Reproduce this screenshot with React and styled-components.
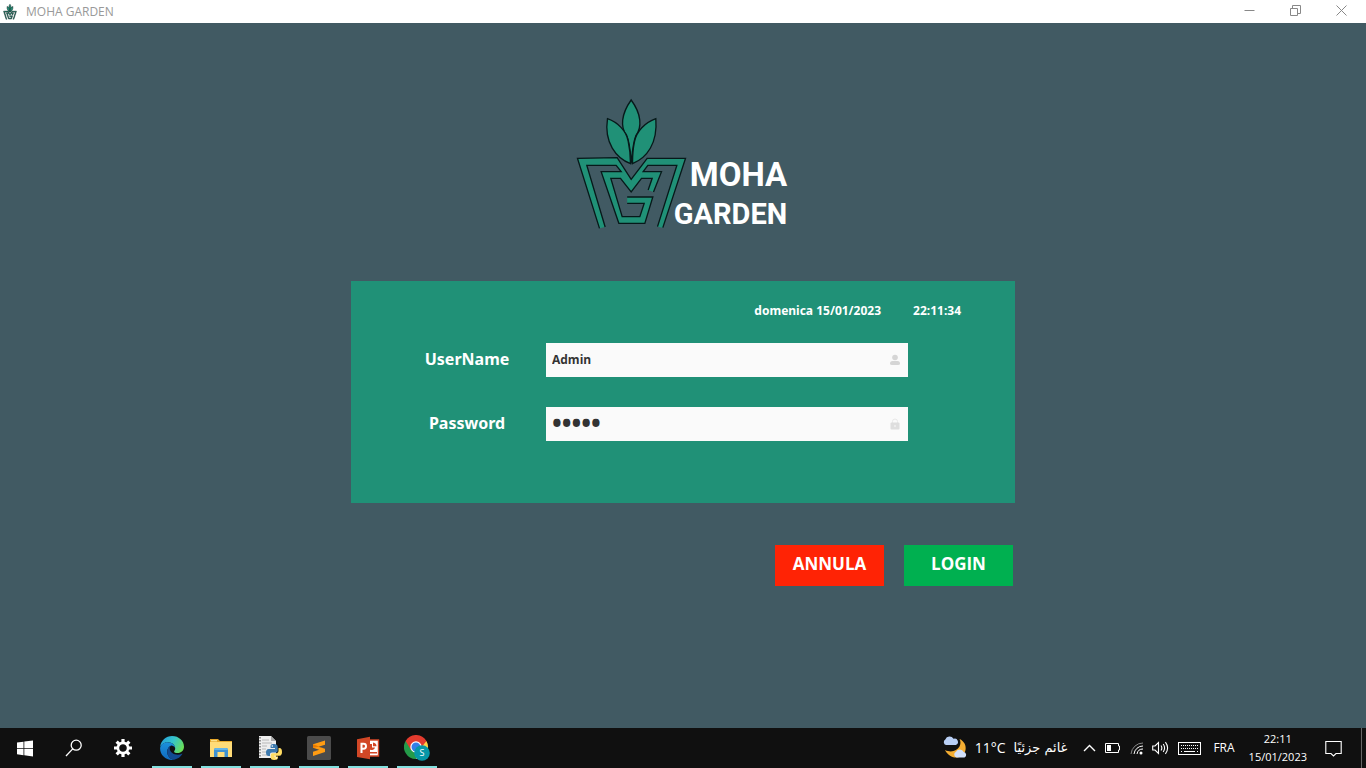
import React from 'react';
import styled, { createGlobalStyle } from 'styled-components';

const GlobalStyle = createGlobalStyle`
  *, *::before, *::after { box-sizing: border-box; }
  body { margin: 0; font-family: "Noto Sans", "Open Sans", sans-serif; }
  button, input { font: inherit; color: inherit; }
`;

const Screen = styled.div`
  min-height: 100vh;
  display: flex;
  flex-direction: column;
  background: #415a63;
`;

/* Window title bar */
const TitleBar = styled.header`
  height: 23px;
  display: flex;
  align-items: center;
  padding: 0 2px;
  background: #fff;
  color: #999;
`;

const Title = styled.span`
  flex: 1;
  margin-left: 8px;
  font-family: "Open Sans", sans-serif;
  font-size: 12px;
  line-height: 20px;
`;

const WindowButton = styled.button`
  width: 46px;
  height: 23px;
  padding: 0 0 2px;
  border: 0;
  background: none;
  display: flex;
  align-items: center;
  justify-content: center;
`;

/* Login page */
const Main = styled.main`
  flex: 1;
  display: flex;
  flex-direction: column;
  align-items: center;
  padding: 75px 16px 32px;
`;

const Brand = styled.div`
  display: flex;
  align-items: flex-end;
  margin-bottom: 49px;
`;

const WordMark = styled.h1`
  margin: 0 3px 0 -13px;
  display: flex;
  flex-direction: column;
  align-items: flex-end;
  gap: 3px;
  font-family: Roboto, sans-serif;
  font-weight: 700;
  color: #fff;
`;

const WordLine = styled.span`
  font-size: ${(p) => p.$size}px;
  line-height: 36px;
`;

const LoginForm = styled.form`
  width: 100%;
  max-width: 664px;
`;

const Card = styled.div`
  background: #209177;
  color: #fff;
  padding: 20px 54px 62px 74px;
`;

const DateRow = styled.div`
  display: flex;
  justify-content: flex-end;
  gap: 32px;
  margin-bottom: 22px;
  font-size: 12px;
  line-height: 20px;
  font-weight: 700;
`;

const Fields = styled.div`
  display: grid;
  grid-template-columns: 84px minmax(0, 362px);
  gap: 30px 37px;
  align-items: center;
`;

const Label = styled.label`
  display: flex;
  justify-content: center;
  padding-bottom: 2px;
  font-size: 16px;
  line-height: 24px;
  font-weight: 700;
`;

const InputBox = styled.div`
  height: 34px;
  display: flex;
  align-items: center;
  padding: 0 7px 0 6px;
  background: #fafafa;
  color: #333;
`;

const Input = styled.input`
  flex: 1;
  min-width: 0;
  height: 34px;
  padding: 0 0 2px;
  border: 0;
  outline: 0;
  background: none;
  font-family: "Open Sans", sans-serif;
  font-size: ${(p) => (p.type === 'password' ? 26 : 12)}px;
  font-weight: 700;
`;

const Actions = styled.div`
  display: flex;
  justify-content: flex-end;
  gap: 20px;
  padding: 42px 2px 0;
`;

const ActionButton = styled.button`
  width: 109px;
  height: 41px;
  padding: 0 0 4px;
  border: 0;
  background: ${(p) => p.$color};
  color: #fff;
  font-family: "Open Sans", sans-serif;
  font-size: 17px;
  font-weight: 700;
`;

/* Taskbar */
const Taskbar = styled.footer`
  height: 40px;
  display: flex;
  justify-content: space-between;
  background: #101010;
  color: #fff;
  font-family: "Open Sans", sans-serif;
`;

const Apps = styled.nav`
  display: flex;
  gap: 9px;
  padding-left: 5px;
`;

const AppButton = styled.button`
  width: 40px;
  height: 40px;
  padding: 2px 0 0;
  border: 0;
  border-bottom: 2px solid ${(p) => (p.$open ? '#83e0df' : 'transparent')};
  background: none;
  display: flex;
  align-items: center;
  justify-content: center;
`;

const Tray = styled.div`
  display: flex;
  align-items: center;
  gap: 9px;
  padding-right: 4px;
`;

const Weather = styled.div`
  display: flex;
  align-items: center;
  gap: 8px;
  margin-right: 7px;
  font-size: 14px;
  line-height: 20px;
`;

const Arabic = styled.span`
  font-family: "DejaVu Sans", sans-serif;
  font-size: 13px;
`;

const Language = styled.span`
  font-size: 12px;
  line-height: 20px;
  margin: 0 5px 0 3px;
`;

const Clock = styled.div`
  margin-right: 9px;
  font-size: 11px;
  line-height: 18px;
  text-align: center;
`;

const ShowDesktop = styled.div`
  width: 1px;
  height: 40px;
  margin-left: 10px;
  background: #666;
`;

const LogoMark = ({ width, height, line }) => (
  <svg width={width} height={height} viewBox="30 24 332 402" aria-hidden="true">
    <g fill="#209177" stroke="#07191a" strokeWidth={line} strokeLinejoin="miter">
      <path d="M195 30C165 72 162 112 181 135C192 160 193 190 195 220C198 190 200 160 209 137C228 112 226 72 195 30Z" />
      <path d="M124 86C155 97 180 122 186 153C191 176 193 198 193 221C150 204 113 158 124 86Z" />
      <path d="M269 86C236 98 211 124 205 155C200 178 199 198 199 221C242 204 275 160 269 86Z" />
    </g>
    <path
      fill="#209177"
      d="M100 415L34 205L153 203L195 268L243 205L358 205L290 413L274 410L332 226L245 226L231 245L286 245L262 306L246 300L258 265L226 265L195 306L163 265L134 265L168 380L221 380L234 340L183 340L183 321L260 321L236 400L158 400L105 245L165 245L150 226L62 226L117 411Z"
    />
    <g fill="none" stroke="#07191a" strokeWidth={line}>
      <path d="M100 415L34 205L153 203L195 268L243 205L358 205L290 413" />
      <path d="M274 410L332 226L245 226L231 245L286 245L262 306" />
      <path d="M246 300L258 265L226 265L195 306L163 265L134 265L168 380L221 380L234 340L183 340" />
      <path d="M183 321L260 321L236 400L158 400L105 245L165 245L150 226L62 226L117 411" />
    </g>
  </svg>
);

const UserIcon = () => (
  <svg width="12" height="12" viewBox="0 0 12 12" fill="#d5d5d5" aria-hidden="true">
    <circle cx="6" cy="3.5" r="2.8" />
    <path d="M1 9.5Q1 7 3.5 7H8.5Q11 7 11 9.5Q11 11 9 11H3Q1 11 1 9.5Z" />
  </svg>
);

const LockIcon = () => (
  <svg width="12" height="12" viewBox="0 0 12 12" aria-hidden="true">
    <path d="M3.5 6V3.5Q3.5 1 6 1T8.5 3.5V6" fill="none" stroke="#e8e8e8" />
    <rect x="1.5" y="4.5" width="9" height="7" rx="1" fill="#dedede" />
    <circle cx="6" cy="8" r="1.2" fill="#ececec" />
  </svg>
);

const StartIcon = () => (
  <svg width="16" height="17" viewBox="0 0 16 17" fill="#fff">
    <path d="M0 2.6L6.5 1.7V8H0ZM7.3 1.6L16 .4V8H7.3ZM0 8.8H6.5V15.2L0 14.3ZM7.3 8.8H16V16.5L7.3 15.3Z" />
  </svg>
);

const SearchIcon = () => (
  <svg width="18" height="18" viewBox="0 0 18 18" fill="none" stroke="#fff" strokeWidth="1.3">
    <circle cx="11.2" cy="6.2" r="5" />
    <path d="M7.7 9.9L1 17" />
  </svg>
);

const GearIcon = () => (
  <svg width="18" height="18" viewBox="-9 -9 18 18" fill="none" stroke="#fff">
    <circle r="5.1" strokeWidth="2.6" />
    {[0, 45, 90, 135].map((a) => (
      <path key={a} d="M0-9V-5M0 5V9" strokeWidth="3.2" transform={`rotate(${a})`} />
    ))}
  </svg>
);

const EdgeIcon = () => (
  <svg width="24" height="24" viewBox="0 0 24 24">
    <defs>
      <linearGradient id="edgeTop" x1="0" x2="1" y1="0.2" y2="0.6">
        <stop offset="0" stopColor="#249edb" />
        <stop offset="0.5" stopColor="#36c5cb" />
        <stop offset="1" stopColor="#6bdf55" />
      </linearGradient>
      <linearGradient id="edgeSide" x1="0" x2="0" y1="0" y2="1">
        <stop offset="0" stopColor="#1b91dc" />
        <stop offset="1" stopColor="#1169bd" />
      </linearGradient>
    </defs>
    <path fill="url(#edgeTop)" d="M.2 10.8C.8 4.7 6 .1 12.1.1C19 .1 24 5.1 24 10.7C24 14.5 21.1 17 17.7 17C15.6 17 14.1 16.3 14.1 15.4C14.1 14.5 15.2 14.3 15.2 12.4C15.2 9 11.9 6.2 8 6.2C4.5 6.2 1.4 8 .2 10.8Z" />
    <path fill="url(#edgeSide)" d="M.1 12.5C.2 8.8 3.8 6.2 7.7 6.2C11.9 6.2 15.2 9 15.2 12C14.5 10.4 12.8 9.3 11.2 9.4C8.7 10.5 7.2 12.9 7.2 15.7C7.2 20 10.4 23.3 14.3 23.7C7 25.3.1 19.7.1 12.5Z" />
    <path fill="#124b91" d="M11.2 9.4C8.7 10.5 7.2 12.9 7.2 15.7C7.2 20 10.4 23.5 14.3 23.7C17.7 23 20.7 21 22.3 18.1C22.5 17.7 22.2 17.5 21.8 17.7C20.6 18.4 19.2 18.7 17.8 18.7C13.4 18.7 9.7 15.8 9.7 12.2C9.7 11 10.3 10 11.2 9.4Z" />
  </svg>
);

const FolderIcon = () => (
  <svg width="22" height="20" viewBox="0 0 22 20">
    <path fill="#e7a82b" d="M0 1H8L10 3H22V19H0Z" />
    <path fill="#ffdc78" d="M0 4H22V19H0Z" />
    <path fill="#fff0a8" d="M1 2.2H7V3.3H1Z" />
    <path fill="#3e91d1" d="M4 19V12Q4 10 6 10H16Q18 10 18 12V19H14.5V14H7.5V19Z" />
    <path fill="#65b5e6" d="M4 12Q4 10 6 10H16Q18 10 18 12Z" />
  </svg>
);

const PythonIcon = () => (
  <svg width="24" height="24" viewBox="0 0 24 24">
    <path fill="#eee" d="M1 0H13L18 5V22H1Z" />
    <path fill="#aaa" d="M13 0V5H18Z" />
    <path fill="none" stroke="#aaa" strokeWidth=".8" d="M4 4H11M4 7H14M4 10H9M4 13H8M4 16H8M4 19H9" />
    <path stroke="#333" strokeDasharray="1.5 1.5" d="M2 1V22" />
    <path fill="#3c79ad" d="M16 8C12.5 8 12.6 9.4 12.6 11V12H17V13H10.8C8.5 13 8 15 8 16.5C8 19 9 20 10.6 20H12V18Q12 16.5 14 16.5H18Q19.7 16.5 19.7 14.5V11Q19.7 8 16 8Z" />
    <circle cx="14.3" cy="10" r=".8" fill="#fff" />
    <path fill="#ffdc63" d="M20.5 12V14.5Q20.5 17.2 18 17.2H14.5Q12.7 17.2 12.7 19V21.5Q12.7 24 16.2 24Q20 24 20 21.5V20.5H16V19.7H21.5C23.3 19.7 24 18 24 16C24 13 23 12 21.5 12Z" />
    <circle cx="18.2" cy="22" r=".8" fill="#fff" />
  </svg>
);

const SublimeIcon = () => (
  <svg width="24" height="24" viewBox="0 0 24 24">
    <rect width="24" height="24" rx="1.5" fill="#4b4b4b" />
    <path fill="#ff9c13" d="M6 8.3L18 4.5V8.7L11.5 10.8L18 12.8V16.1L6 19.9V15.8L12.2 13.7L6 11.7Z" />
    <path fill="#e77900" d="M6 8.3L18 12.8L11.5 10.8L6 11.7Z" />
  </svg>
);

const PowerPointIcon = () => (
  <svg width="24" height="24" viewBox="0 0 24 24">
    <path fill="#fff" stroke="#d34727" strokeWidth="1.4" d="M12 4H22.5V20H12Z" />
    <path fill="#d34727" d="M14 8A3.3 3.3 0 1 0 19 11.5H16V8ZM17 6.5V10.3H20.5Q20.5 7 17 6.5ZM14 16H21V17.4H14Z" />
    <path fill="#d24726" d="M1 3.2L14 .8V23.3L1 21Z" />
    <path fill="none" stroke="#fff" strokeWidth="2" d="M5.5 17V7.8H7.6Q10 7.8 10 10.2T7.5 12.8H5.5" />
  </svg>
);

const ChromeLetter = styled.text`
  font-family: "Open Sans", sans-serif;
  font-size: 9px;
`;

const ChromeIcon = () => (
  <svg width="26" height="26" viewBox="0 0 26 26">
    <path fill="#e33b2e" d="M12 12L1.6 6A12 12 0 0 1 22.4 6Z" />
    <path fill="#ffd043" d="M12 12L22.4 6A12 12 0 0 1 12 24Z" />
    <path fill="#249b49" d="M12 12V24A12 12 0 0 1 1.6 6Z" />
    <path fill="#e33b2e" d="M12 6H22.4L17 13L7 15L1.6 6Z" />
    <circle cx="12" cy="12" r="5.7" fill="#fff" />
    <circle cx="12" cy="12" r="4.5" fill="#347ee8" />
    <circle cx="18" cy="18" r="7.8" fill="#0797a7" />
    <ChromeLetter x="18" y="21.3" textAnchor="middle" fill="#fff">S</ChromeLetter>
  </svg>
);

const WeatherIcon = () => (
  <svg width="24" height="24" viewBox="0 0 24 24">
    <path fill="#f4ad32" d="M16.5 3C21 5 23.5 9.5 22.5 14C21 21 13.5 23.5 7.5 20C5 18.6 3 16.3 2 14C8 17 14 15 16.5 10.5C17.8 8 17.8 5.4 16.5 3Z" />
    <path fill="#b9cff5" d="M3 9A3 3 0 0 1 2.3 3.5A4.6 4.6 0 0 1 10.5 2.8A3.2 3.2 0 0 1 12.8 9Z" />
    <path fill="#d2e0fb" d="M13.5 21.5A3.1 3.1 0 0 1 13 15.7A4.4 4.4 0 0 1 20.7 16A2.9 2.9 0 0 1 21.5 21.5Z" />
  </svg>
);

const ChevronIcon = () => (
  <svg width="13" height="8" viewBox="0 0 13 8" fill="none" stroke="#fff" strokeWidth="1.4">
    <path d="M1 7L6.5 1.5L12 7" />
  </svg>
);

const BatteryIcon = () => (
  <svg width="16" height="10" viewBox="0 0 16 10">
    <path d="M.5 .5H13.5V3H14.5V7H13.5V9.5H.5Z" fill="none" stroke="#fff" />
    <path d="M2 2H6V8H2Z" fill="#fff" />
  </svg>
);

const WifiIcon = () => (
  <svg width="13" height="14" viewBox="0 0 13 14" fill="none" stroke="#fff">
    <path d="M1 13A12 12 0 0 1 13 2" stroke="#888" />
    <path d="M4 13A9 9 0 0 1 13 5M7 13A6 6 0 0 1 13 8" />
    <circle cx="11" cy="12" r="1.5" fill="#fff" stroke="none" />
  </svg>
);

const VolumeIcon = () => (
  <svg width="17" height="14" viewBox="0 0 17 14" fill="none" stroke="#fff" strokeWidth="1.1">
    <path d="M.7 5H3L6.5 1.5V12.5L3 9H.7ZM9 4.5Q10.7 7 9 9.5M11.2 3Q14 7 11.2 11M13.4 1.2Q17.8 7 13.4 12.8" />
  </svg>
);

const KeyboardIcon = () => (
  <svg width="23" height="13" viewBox="0 0 23 13" fill="none" stroke="#fff">
    <rect x=".5" y=".5" width="22" height="12" />
    <path d="M3 3.5H20M3 6.5H20" strokeDasharray="1 1" />
    <path d="M3 9.5H4M6 9.5H17M19 9.5H20" />
  </svg>
);

const MessageIcon = () => (
  <svg width="17" height="17" viewBox="0 0 17 17" fill="none" stroke="#fff" strokeWidth="1.1">
    <path d="M.8 1.5H16.2V13.5H11L8.5 16L6 13.5H.8Z" />
  </svg>
);

const apps = [
  { name: 'Start', Icon: StartIcon },
  { name: 'Search', Icon: SearchIcon },
  { name: 'Settings', Icon: GearIcon },
  { name: 'Edge', Icon: EdgeIcon, open: true },
  { name: 'Files', Icon: FolderIcon, open: true },
  { name: 'Python', Icon: PythonIcon, open: true },
  { name: 'Sublime Text', Icon: SublimeIcon, open: true },
  { name: 'PowerPoint', Icon: PowerPointIcon, open: true },
  { name: 'Chrome', Icon: ChromeIcon, open: true },
];

const windowControls = [
  { name: 'Minimize', d: 'M.5 5.5H10.5' },
  { name: 'Restore', d: 'M.5 3.5H7.5V10.5H.5ZM2.5 3V.5H10.5V8.5H8' },
  { name: 'Close', d: 'M.5 .5L10.5 10.5M10.5 .5L.5 10.5' },
];

export default function App() {
  return (
    <Screen>
      <GlobalStyle />
      <TitleBar>
        <LogoMark width={16} height={16} line={12} />
        <Title>MOHA GARDEN</Title>
        {windowControls.map((c) => (
          <WindowButton key={c.name} type="button" aria-label={c.name}>
            <svg width="11" height="11" viewBox="0 0 11 11" fill="none" stroke="#888">
              <path d={c.d} />
            </svg>
          </WindowButton>
        ))}
      </TitleBar>

      <Main>
        <Brand>
          <LogoMark width={111} height={134} line={4} />
          <WordMark>
            <WordLine $size={33}>MOHA</WordLine>
            <WordLine $size={29}>GARDEN</WordLine>
          </WordMark>
        </Brand>
        <LoginForm onSubmit={(e) => e.preventDefault()}>
          <Card>
            <DateRow>
              <span>domenica 15/01/2023</span>
              <span>22:11:34</span>
            </DateRow>
            <Fields>
              <Label htmlFor="username">UserName</Label>
              <InputBox>
                <Input id="username" type="text" defaultValue="Admin" />
                <UserIcon />
              </InputBox>
              <Label htmlFor="password">Password</Label>
              <InputBox>
                <Input id="password" type="password" defaultValue="admin" />
                <LockIcon />
              </InputBox>
            </Fields>
          </Card>
          <Actions>
            <ActionButton type="button" $color="#ff2305">ANNULA</ActionButton>
            <ActionButton type="submit" $color="#00b050">LOGIN</ActionButton>
          </Actions>
        </LoginForm>
      </Main>

      <Taskbar>
        <Apps>
          {apps.map(({ name, Icon, open }) => (
            <AppButton key={name} type="button" aria-label={name} $open={open}>
              <Icon />
            </AppButton>
          ))}
        </Apps>
        <Tray>
          <Weather>
            <WeatherIcon />
            <span>11°C</span>
            <Arabic lang="ar" dir="rtl">غائم جزئيًا</Arabic>
          </Weather>
          <ChevronIcon />
          <BatteryIcon />
          <WifiIcon />
          <VolumeIcon />
          <KeyboardIcon />
          <Language>FRA</Language>
          <Clock>
            <div>22:11</div>
            <div>15/01/2023</div>
          </Clock>
          <MessageIcon />
          <ShowDesktop />
        </Tray>
      </Taskbar>
    </Screen>
  );
}
